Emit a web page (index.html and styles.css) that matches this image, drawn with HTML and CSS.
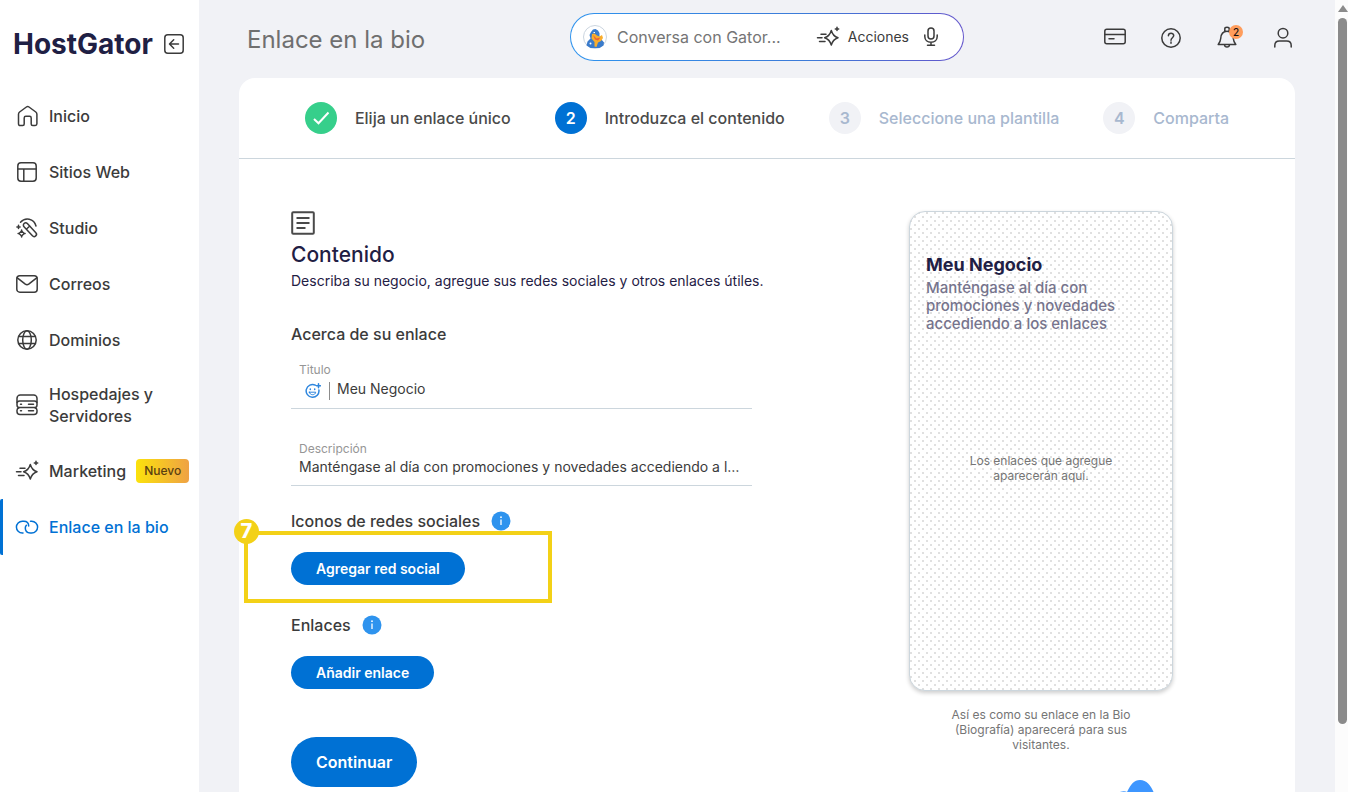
FILE: index.html
```html
<!DOCTYPE html>
<html lang="es">
<head>
<meta charset="utf-8">
<meta name="viewport" content="width=device-width, initial-scale=1">
<title>Enlace en la bio</title>
<link rel="stylesheet" href="styles.css">
</head>
<body>
<svg class="defs" aria-hidden="true">
  <symbol id="sparkle" viewBox="0 0 24 24"><path d="M15.300 5.500c1.200 4.300 2.700 6 6.700 7.300-4 1.300-5.500 3-6.700 7.300-1.200-4.300-2.700-6-6.700-7.300 4-1.300 5.500-3 6.700-7.300zM5 9.200h5M1.500 12.800h4.500M3.500 16.400h5.500"/><path d="M21 2.200v3.400M19.300 3.900h3.400"/></symbol>
  <symbol id="info" viewBox="0 0 20 20"><circle cx="10" cy="10" r="9.500" fill="#2e93ee"/><path d="M10 8.500v5.500" stroke="#fff" stroke-width="1.300"/><circle cx="10" cy="6.200" r=".9" fill="#fff"/></symbol>
</svg>
<div class="app">
  <aside class="sidebar">
    <div class="brand">
      <a class="logo" href="#">HostGator</a>
      <button class="icon-button" type="button" aria-label="Contraer menú"><svg class="icon collapse" viewBox="0 0 20 20"><rect x=".8" y=".8" width="18.400" height="18.400" rx="3"/><path d="M14.500 10H6M9.700 5.800L5.500 10l4.200 4.200"/></svg></button>
    </div>
    <nav class="nav">
      <a class="nav-item" href="#"><svg class="icon" viewBox="0 0 24 24"><path d="M3.500 10.200c0-1 .4-1.600 1.100-2.200l6.800-5c1-.7 1.600-.7 2.600 0l6.800 5c.7.600 1.100 1.200 1.100 2.200v9.600c0 1.200-.6 1.700-1.700 1.700h-2.500c-1 0-1.500-.5-1.500-1.500v-6c0-1.200-.5-1.700-1.600-1.700h-3.800c-1.100 0-1.600.5-1.600 1.700v6c0 1-.5 1.500-1.500 1.500H5.200c-1.100 0-1.700-.5-1.700-1.700z"/></svg><span>Inicio</span></a>
      <a class="nav-item" href="#"><svg class="icon" viewBox="0 0 24 24"><rect x="2.800" y="2.800" width="18.400" height="18.400" rx="3.200"/><path d="M3 9h18M8.800 9v12"/></svg><span>Sitios Web</span></a>
      <a class="nav-item" href="#"><svg class="icon" viewBox="0 0 24 24"><path d="M5.500 6.200C10 1 19 2 21 10"/><rect x="6.400" y="11.400" width="17" height="4.600" rx="2.300" transform="rotate(47 14.900 13.700)"/><path d="M11.800 12.700l2.800-2.400"/><path d="M6.600 15l2.500 2.500L6.600 20l-2.500-2.500z" fill="#fff"/><path d="M3.500 9.300v3.200M1.900 10.900h3.200M6.600 14v1M6.600 20v1M3.100 17.500h1M9.100 17.500h1"/></svg><span>Studio</span></a>
      <a class="nav-item" href="#"><svg class="icon" viewBox="0 0 24 24"><rect x="1.800" y="3.800" width="20.400" height="16.400" rx="3"/><path d="M2.300 5.800l8 6.400c1.200.9 2.200.9 3.400 0l8-6.400"/></svg><span>Correos</span></a>
      <a class="nav-item" href="#"><svg class="icon" viewBox="0 0 24 24"><circle cx="12" cy="12" r="9.200"/><ellipse cx="12" cy="12" rx="4.300" ry="9.200"/><path d="M3.700 8.500h16.600M3.700 15.500h16.600"/></svg><span>Dominios</span></a>
      <a class="nav-item" href="#"><svg class="icon" viewBox="0 0 24 24"><path d="M2 9.500V5.200C2 3.500 3.500 2 5.200 2h13.600C20.500 2 22 3.500 22 5.200v4.300"/><rect x="2" y="8" width="20" height="6.500" rx="2.600"/><path d="M4 14.800c-1.200.5-2 1.300-2 2.500v1.200c0 1.800 1.300 3 3 3h14c1.700 0 3-1.200 3-3v-1.200c0-1.200-.8-2-2-2.500M13.500 11.200h5M13.500 17.800h5M5.500 11.200h1M5.500 17.800h1"/></svg><span>Hospedajes y Servidores</span></a>
      <a class="nav-item" href="#"><svg class="icon"><use href="#sparkle"/></svg><span>Marketing</span><span class="tag">Nuevo</span></a>
      <a class="nav-item active" href="#"><svg class="icon" viewBox="0 0 24 24"><path d="M8 18h-.7a5.900 5.900 0 0 1 0-11.800h1.500c2.900 0 4.900 2 4.900 4.900M15.500 6.200h1.200a5.900 5.900 0 0 1 0 11.800h-1.500c-2.900 0-4.900-2-4.900-4.900 0-1.200.4-2 1.100-2.800"/></svg><span>Enlace en la bio</span></a>
    </nav>
  </aside>

  <main class="main">
    <header class="topbar">
      <h1 class="page-title">Enlace en la bio</h1>
      <div class="search">
        <svg class="gator" viewBox="0 0 24 24" aria-hidden="true"><circle cx="12" cy="12" r="11.500" fill="#fff" stroke="#cbd5df"/><path d="M3.500 20.500l1-4 3-3-1-3.500 1.500-3 2-2.500 2.500-.5 2.500 1.500 1.500 2.500v3.500l2 3 2.500 3-.5 3-4 2.500h-9z" fill="#3a7bcb"/><path d="M9 9l2.500-.5 2.500 2 2.500 1 2.500-1.500 1 3-2 3-3 1.500-1.500 4.500-2-.5V17l-3-3.500z" fill="#f9ae2c"/><path d="M10 10l3.500 3.500 4-1-2.500 3-3-1z" fill="#ee6236"/><path d="M10.500 7.500h1.500" stroke="#fff"/><circle cx="7.500" cy="18.500" r="1" fill="#fff"/></svg>
        <input class="search-input" type="text" aria-label="Conversa con Gator" placeholder="Conversa con Gator...">
        <button class="actions" type="button"><svg class="icon"><use href="#sparkle"/></svg>Acciones</button>
        <button class="icon-button" type="button" aria-label="Dictar"><svg class="icon mic" viewBox="0 0 16 20"><rect x="5" y="1" width="6" height="11" rx="3"/><path d="M1.800 8v1.500c0 3.500 2.600 5.800 6.200 5.800s6.200-2.300 6.200-5.800V8M8 15.300V18M4.500 18.300h7"/></svg></button>
      </div>
      <div class="tools">
        <button class="icon-button" type="button" aria-label="Pagos"><svg class="icon" viewBox="0 0 24 24"><rect x="1.800" y="4.300" width="20.400" height="14.400" rx="2"/><path d="M2 9.500h20M6 13.800h5"/></svg></button>
        <button class="icon-button" type="button" aria-label="Ayuda"><svg class="icon" viewBox="0 0 24 24"><circle cx="12" cy="13" r="9.200"/><path d="M9.400 10.800c0-3.400 5.300-3.400 5.300-.2 0 2.100-2.700 2.200-2.700 4.600"/><path d="M12 17v1.300"/></svg></button>
        <button class="icon-button bell" type="button" aria-label="Notificaciones"><svg class="icon" viewBox="0 0 24 24"><path d="M9.800 6V3.800c0-2.200 4.400-2.200 4.400 0V6M3.200 19.500h17.600c-1.500-1.800-2.300-3.300-2.500-6-.3-4.300-2-7.200-6.300-7.200s-6 2.900-6.300 7.200c-.2 2.700-1 4.200-2.500 6zM9.500 20c.4 2.800 4.600 2.800 5 0"/></svg><span class="count">2</span></button>
        <button class="icon-button" type="button" aria-label="Cuenta"><svg class="icon" viewBox="0 0 24 24"><circle cx="12" cy="8.200" r="4.800"/><path d="M3.800 22v-1.500c0-3 1.700-4.500 4.500-4.500h7.400c2.800 0 4.500 1.500 4.500 4.500V22"/></svg></button>
      </div>
    </header>

    <section class="card">
      <ol class="steps">
        <li class="step done"><span class="dot"><svg class="check" viewBox="0 0 18 18"><path d="M2 10l4.500 4.300L16.500 3.500"/></svg></span>Elija un enlace único</li>
        <li class="step current"><span class="dot">2</span>Introduzca el contenido</li>
        <li class="step"><span class="dot">3</span>Seleccione una plantilla</li>
        <li class="step"><span class="dot">4</span>Comparta</li>
      </ol>
      <div class="content">
        <form class="form">
          <svg class="doc-icon" viewBox="0 0 24 24"><rect x="1.200" y="1.200" width="21.600" height="21.600" rx="1"/><path d="M5.500 7h13M5.500 12h13M5.500 17h9"/></svg>
          <h2 class="form-title">Contenido</h2>
          <p class="lead">Describa su negocio, agregue sus redes sociales y otros enlaces útiles.</p>
          <h3 class="section-title">Acerca de su enlace</h3>
          <div class="field">
            <label class="label" for="title">Titulo</label>
            <div class="field-row">
              <button class="emoji" type="button" aria-label="Insertar emoji"><svg class="icon" viewBox="0 0 16 16"><path d="M10.300 2.100A6.400 6.400 0 1 0 13.900 7M5.300 6v.6M9.700 6v.6M13.500.8v4M11.500 2.800h4"/><path d="M4.300 9.200h6.400c-.4 3.400-6 3.400-6.400 0z" stroke-width="1"/></svg></button>
              <input class="input" id="title" type="text" value="Meu Negocio">
            </div>
          </div>
          <div class="field">
            <label class="label" for="description">Descripción</label>
            <input class="input" id="description" type="text" value="Manténgase al día con promociones y novedades accediendo a los enlaces">
          </div>
          <div class="group marked">
            <h3 class="section-title">Iconos de redes sociales <svg class="info"><use href="#info"/></svg></h3>
            <button class="button" type="button">Agregar red social</button>
            <div class="marker"><span class="marker-number">7</span></div>
          </div>
          <div class="group">
            <h3 class="section-title">Enlaces <svg class="info"><use href="#info"/></svg></h3>
            <button class="button" type="button">Añadir enlace</button>
          </div>
          <button class="button large" type="submit">Continuar</button>
        </form>
        <div class="preview">
          <div class="phone">
            <h2 class="phone-title">Meu Negocio</h2>
            <p class="phone-text">Manténgase al día con promociones y novedades accediendo a los enlaces</p>
            <p class="phone-empty">Los enlaces que agregue aparecerán aquí.</p>
          </div>
          <p class="caption">Así es como su enlace en la Bio (Biografía) aparecerá para sus visitantes.</p>
          <svg class="mascot" viewBox="0 0 44 24" aria-hidden="true"><path d="M0 13c5-2 8-2 10-1C14 4 17 0 23 0c7 0 11 6 14 13l3 11H4z" fill="#3e96ff"/></svg>
        </div>
      </div>
    </section>
  </main>

  <div class="scrollbar" aria-hidden="true"><span class="scroll-arrow"></span><span class="scroll-thumb"></span></div>
</div>
</body>
</html>
```
FILE: styles.css
```css
* { box-sizing: border-box; }

body {
  margin: 0;
  color: #3b3b3b;
  font: 16px/24px Inter, "Liberation Sans", sans-serif;
  background: #f1f2f6;
}

h1, h2, h3, p, ol { margin: 0; padding: 0; }

button, input {
  padding: 0;
  border: 0;
  background: none;
  color: inherit;
  font: inherit;
}

a { color: inherit; text-decoration: none; }
svg { display: block; flex: none; }
.defs { position: absolute; width: 0; height: 0; }

.icon {
  width: 24px;
  height: 24px;
  fill: none;
  stroke: currentColor;
  stroke-width: 1.5;
  stroke-linecap: round;
  stroke-linejoin: round;
}

.icon-button { display: flex; }

.app {
  display: grid;
  grid-template-columns: 199px minmax(0, 1fr) 13px;
  height: 100vh;
  overflow: hidden;
}

/* Sidebar */
.sidebar { background: #fff; }

.brand {
  display: flex;
  align-items: center;
  justify-content: space-between;
  height: 88px;
  padding: 0 15px 0 13px;
}

.logo {
  color: #1f2044;
  font-size: 28px;
  font-weight: 700;
}

.collapse { width: 20px; height: 20px; }

.nav-item {
  display: flex;
  align-items: center;
  gap: 10px;
  min-height: 56px;
  padding: 15px 10px 16px 15px;
  font-weight: 500;
  line-height: 22px;
}

.nav-item.active {
  padding-left: 12px;
  border-left: 3px solid #0071d4;
  border-radius: 2px;
  color: #0071d4;
}

.tag {
  margin-left: auto;
  padding: 1px 8px;
  border-radius: 4px;
  background: linear-gradient(90deg, #fbe20c, #efa244);
  color: #5a4011;
  font-size: 12px;
}

/* Top bar */
.main { padding: 0 40px; overflow: hidden; }

.topbar {
  display: grid;
  grid-template-columns: 1fr 394px 1fr;
  align-items: center;
  height: 78px;
  padding-bottom: 4px;
}

.page-title {
  padding: 6px 0 0 8px;
  color: #6f6f6f;
  font-size: 24px;
  font-weight: 400;
}

.search {
  display: flex;
  align-items: center;
  height: 48px;
  padding: 0 24px 0 12px;
  border: 1px solid transparent;
  border-radius: 24px;
  background:
    linear-gradient(#fff, #fff) padding-box,
    linear-gradient(90deg, #2e93ee, #3d7bd8 60%, #6456cc) border-box;
}

.gator { width: 24px; height: 24px; }

.search-input {
  flex: 1;
  min-width: 0;
  margin-left: 10px;
  font-size: 16px;
}

.search-input::placeholder { color: #757575; opacity: 1; }

.actions {
  display: flex;
  align-items: center;
  gap: 8px;
  margin-right: 14px;
  font-size: 14px;
}

.mic { width: 16px; height: 20px; }

.tools {
  display: flex;
  justify-content: flex-end;
  gap: 32px;
}

.bell { position: relative; }

.count {
  position: absolute;
  top: 0;
  right: -4px;
  width: 14px;
  height: 14px;
  border-radius: 50%;
  background: #ff9d5c;
  color: #111;
  font-size: 10px;
  font-weight: 500;
  line-height: 14px;
  text-align: center;
}

/* Card and steps */
.card {
  min-height: 100vh;
  border-radius: 16px 16px 0 0;
  background: #fff;
}

.steps {
  display: flex;
  justify-content: center;
  gap: 44px;
  padding: 24px;
  border-bottom: 1px solid #ccd6dd;
  list-style: none;
}

.step {
  display: flex;
  align-items: center;
  gap: 18px;
  color: #a8b8cf;
  font-weight: 500;
  white-space: nowrap;
}

.step.done, .step.current { color: #4a4a4a; }

.dot {
  display: flex;
  align-items: center;
  justify-content: center;
  width: 32px;
  height: 32px;
  border-radius: 50%;
  background: #f1f2f6;
  font-weight: 600;
}

.done .dot { background: #36cf8b; }
.step.current .dot { background: #0071d4; color: #fff; }

.check {
  width: 18px;
  height: 18px;
  fill: none;
  stroke: #fff;
  stroke-width: 2;
}

.content {
  display: grid;
  grid-template-columns: minmax(0, 461px) minmax(0, 1fr);
  gap: 87px;
  padding: 52px 52px 0;
}

/* Form */
.form {
  display: flex;
  flex-direction: column;
  align-items: flex-start;
}

.doc-icon {
  width: 24px;
  height: 24px;
  fill: none;
  stroke: #4a4a4a;
  stroke-width: 2;
}

.form-title {
  margin-top: 6px;
  color: #1f2044;
  font-size: 21px;
  font-weight: 500;
  line-height: 28px;
}

.lead {
  margin: 2px 0 31px;
  color: #1f2044;
  font-size: 14px;
  line-height: 20px;
  white-space: nowrap;
}

.section-title {
  display: flex;
  align-items: center;
  gap: 11px;
  font-size: 16px;
  font-weight: 500;
  line-height: 24px;
}

.info { width: 20px; height: 20px; }

.field {
  width: 100%;
  margin-bottom: 16px;
  padding: 16px 8px 8px;
  border-bottom: 1px solid #ccd6dd;
}

.label {
  display: block;
  color: #969696;
  font-size: 12px;
  line-height: 16px;
}

.field-row { display: flex; align-items: center; }

.emoji {
  margin-top: 4px;
  padding: 1px 8px 1px 6px;
  border-right: 1px solid #8c8c8c;
  color: #2e86de;
}

.emoji .icon { width: 16px; height: 16px; }

.field-row .input { margin-left: 7px; }

.input {
  display: block;
  width: 100%;
  min-width: 0;
  height: 20px;
  font-size: 14px;
  line-height: 20px;
  text-overflow: ellipsis;
}

.group { margin: 7px 0 21px; }
.group .button { display: block; margin-top: 19px; }

.button {
  height: 33px;
  padding: 0 25px;
  border-radius: 25px;
  background: #0071d4;
  color: #fff;
  font-size: 14px;
  font-weight: 600;
}

.button.large {
  height: 50px;
  margin-top: 27px;
  font-size: 16px;
}

.marked { position: relative; }

.marker {
  position: absolute;
  top: 22px;
  left: -47px;
  width: 308px;
  height: 72px;
  border: 4px solid #f3d117;
  pointer-events: none;
}

.marker-number {
  position: absolute;
  top: -16px;
  left: -14px;
  width: 25px;
  height: 25px;
  border-radius: 50%;
  background: #f3d117;
  color: #fff;
  font-size: 20px;
  font-weight: 800;
  line-height: 25px;
  text-align: center;
}

/* Preview */
.preview {
  display: flex;
  flex-direction: column;
  align-items: center;
}

.phone {
  width: 264px;
  min-height: 480px;
  padding: 41px 16px;
  border: 1px solid #ccd6dd;
  border-radius: 16px;
  background-color: #fff;
  background-image:
    conic-gradient(from 270deg at 2px 2px, #e0e0e0 90deg, transparent 0),
    conic-gradient(from 270deg at 2px 2px, #e0e0e0 90deg, transparent 0);
  background-position: 0 0, 4px 4px;
  background-size: 8px 8px;
  box-shadow: 0 2px 4px rgba(0, 0, 0, 0.2);
}

.phone-title {
  color: #1f2044;
  font-size: 18px;
  font-weight: 700;
}

.phone-text {
  margin-top: 2px;
  color: #76748c;
  font-size: 15px;
  font-weight: 500;
  line-height: 18px;
}

.phone-empty, .caption {
  width: 184px;
  color: #757575;
  font-size: 12px;
  line-height: 15px;
  text-align: center;
}

.phone-empty { margin: 120px auto 0; }
.caption { margin-top: 16px; }
.mascot { width: 44px; height: 24px; margin: 28px 0 0 196px; }

/* Scroll rail */
.scrollbar {
  display: flex;
  flex-direction: column;
  align-items: center;
  gap: 6px;
  padding: 5px 0 68px 2px;
  background: #fcfcfc;
}

.scroll-arrow {
  border: 5px solid transparent;
  border-top: 0;
  border-bottom: 7px solid #8b8b8b;
}

.scroll-thumb {
  flex: 1;
  width: 9px;
  border-radius: 5px;
  background: #8b8b8b;
}
```
